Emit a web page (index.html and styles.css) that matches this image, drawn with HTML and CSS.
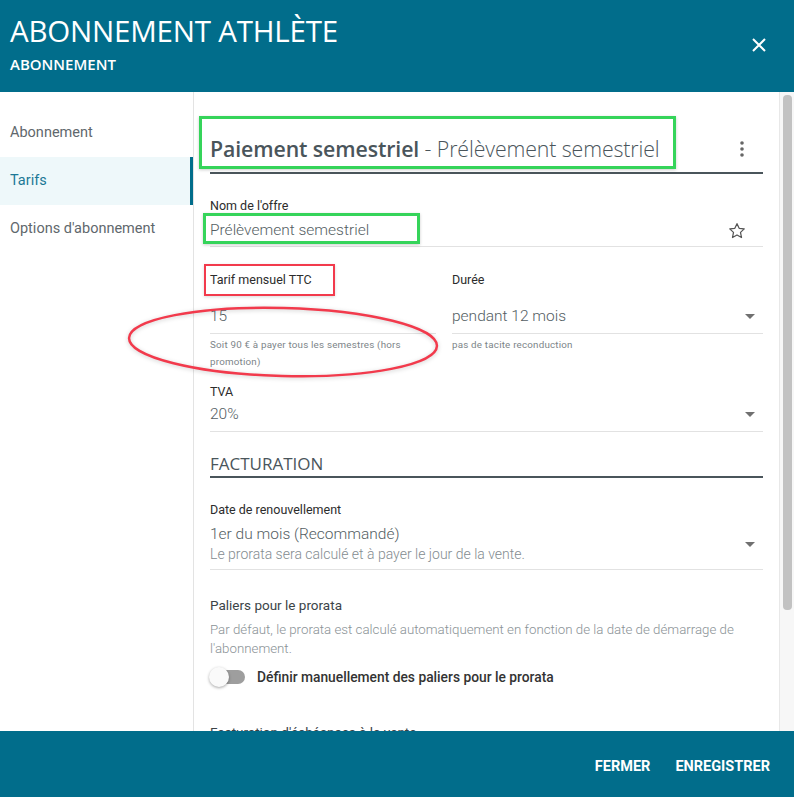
FILE: index.html
```html
<!DOCTYPE html>
<html lang="fr">
<head>
  <meta charset="UTF-8">
  <meta name="viewport" content="width=device-width, initial-scale=1.0">
  <title>Abonnement athlète</title>
  <link rel="stylesheet" href="styles.css">
</head>
<body>
  <div class="dialog">
    <header class="dialog-header">
      <div>
        <h1 class="dialog-title">ABONNEMENT ATHLÈTE</h1>
        <div class="dialog-subtitle">ABONNEMENT</div>
      </div>
      <svg class="close-icon" width="14" height="14" viewBox="0 0 14 14">
        <path d="M1 1L13 13M13 1L1 13" stroke="#fff" stroke-width="2"/>
      </svg>
    </header>

    <div class="dialog-body">
      <nav class="side-menu">
        <a class="menu-item">Abonnement</a>
        <a class="menu-item active">Tarifs</a>
        <a class="menu-item">Options d'abonnement</a>
      </nav>

      <main class="content">
        <div class="section-head">
          <h2 class="section-title mark-green">
            <b>Paiement semestriel</b> - Prélèvement semestriel
          </h2>
          <svg class="kebab" width="4" height="16" viewBox="0 0 4 16">
            <circle cx="2" cy="2" r="1.8" fill="#666"/>
            <circle cx="2" cy="8" r="1.8" fill="#666"/>
            <circle cx="2" cy="14" r="1.8" fill="#666"/>
          </svg>
        </div>

        <div class="field field-name">
          <label class="field-label">Nom de l'offre</label>
          <div class="field-input">
            <span class="field-value mark-green name-box">Prélèvement semestriel</span>
            <svg class="star" width="20" height="20" viewBox="0 0 24 24">
              <path d="M12 3.2l2.6 5.6 6.1.7-4.5 4.2 1.2 6.1L12 16.8l-5.4 3 1.2-6.1-4.5-4.2 6.1-.7z" fill="none" stroke="#555" stroke-width="1.5" stroke-linejoin="round"/>
            </svg>
          </div>
        </div>

        <div class="field-row">
          <div class="field col-left">
            <label class="field-label"><span class="mark-red">Tarif mensuel TTC</span></label>
            <div class="field-input">
              <span class="field-value">15</span>
            </div>
            <p class="field-hint">Soit 90 € à payer tous les semestres (hors promotion)</p>
          </div>
          <div class="field col-right">
            <label class="field-label">Durée</label>
            <div class="field-input">
              <span class="field-value">pendant 12 mois</span>
              <span class="caret"></span>
            </div>
            <p class="field-hint">pas de tacite reconduction</p>
          </div>
        </div>

        <div class="field field-tva">
          <label class="field-label">TVA</label>
          <div class="field-input">
            <span class="field-value">20%</span>
            <span class="caret"></span>
          </div>
        </div>

        <h3 class="subsection">FACTURATION</h3>

        <div class="field field-date">
          <label class="field-label">Date de renouvellement</label>
          <div class="field-input">
            <div>
              <div class="field-value">1er du mois (Recommandé)</div>
              <div class="field-sub">Le prorata sera calculé et à payer le jour de la vente.</div>
            </div>
            <span class="caret"></span>
          </div>
        </div>

        <div class="block">
          <div class="block-title">Paliers pour le prorata</div>
          <p class="block-text">Par défaut, le prorata est calculé automatiquement en fonction de la date de démarrage de l'abonnement.</p>
          <div class="toggle-row">
            <span class="toggle"><span class="toggle-knob"></span></span>
            <span class="toggle-label">Définir manuellement des paliers pour le prorata</span>
          </div>
        </div>

        <div class="block block-next">
          <div class="block-title">Facturation d'échéances à la vente</div>
        </div>
      </main>

      <div class="scrollbar"><div class="scroll-thumb"></div></div>

      <!-- cercle rouge autour du texte d'aide -->
      <svg class="mark-ellipse" width="314" height="74" viewBox="0 0 314 74">
        <ellipse cx="157" cy="37" rx="154" ry="34" fill="none" stroke="#f23a4c" stroke-width="2.5" transform="rotate(1.5 157 37)"/>
      </svg>
    </div>

    <footer class="dialog-footer">
      <button class="footer-btn">FERMER</button>
      <button class="footer-btn">ENREGISTRER</button>
    </footer>
  </div>
</body>
</html>
```

FILE: styles.css
```css
body {
  margin: 0;
  font-family: Roboto, Arial, sans-serif;
  color: #333;
  background: #fff;
}
.dialog {
  width: 794px;
  height: 797px;
  display: flex;
  flex-direction: column;
  overflow: hidden;
}

/* en-tête */
.dialog-header {
  background-color: #016d8b;
  color: white;
  height: 92px;
  box-sizing: border-box;
  padding: 13px 28px 0 10px;
  display: flex;
  justify-content: space-between;
  align-items: flex-start;
}
.dialog-title {
  margin: 0;
  font-family: "Open Sans", sans-serif;
  font-weight: 400;
  font-size: 29.5px;
  line-height: 36px;
  letter-spacing: -0.2px;
}
.dialog-subtitle {
  font-family: "Open Sans", sans-serif;
  font-weight: 600;
  font-size: 15px;
  line-height: 20px;
  margin-top: 5px;
}
.close-icon {
  margin-top: 25px;
}

/* corps */
.dialog-body {
  flex: 1;
  display: flex;
  position: relative;
  min-height: 0;
}
.side-menu {
  width: 193px;
  flex-shrink: 0;
  border-right: 1px solid #e3e3e3;
  padding-top: 17px;
}
.menu-item {
  display: block;
  height: 48px;
  line-height: 48px;
  padding-left: 10px;
  font-size: 14.5px;
  color: #5f686d;
}
.menu-item.active {
  background-color: #eef8fa;
  color: #1b7896;
  border-right: 3px solid #016d8b;
}

.content {
  flex: 1;
  padding: 24px 16px 0 16px;
  overflow: hidden;
  min-width: 0;
}
.scrollbar {
  width: 15px;
  flex-shrink: 0;
  background: #f7f7f7;
  border-left: 1px solid #e8e8e8;
  box-sizing: border-box;
  padding: 3px 2px 0 3px;
}
.scroll-thumb {
  height: 515px;
  background: #c2c2c2;
  border-radius: 4px;
}

/* annotations */
.mark-green {
  border: 3px solid #35d45a;
  box-shadow: 0 1px 3px rgba(0,0,0,0.2);
}
.mark-red {
  display: inline-block;
  border: 2px solid #f23a4c;
  padding: 6px 21px 6px 4px;
  margin-left: -6px;
  box-shadow: 0 1px 3px rgba(0,0,0,0.15);
}
.mark-ellipse {
  position: absolute;
  left: 126px;
  top: 213px;
  filter: drop-shadow(0 1px 2px rgba(0,0,0,0.2));
}

/* titre de section */
.section-head {
  display: flex;
  justify-content: space-between;
  align-items: flex-end;
  border-bottom: 2px solid #4a555b;
  padding-bottom: 3px;
}
.section-title {
  margin: 0 0 0 -11px;
  width: 477px;
  box-sizing: border-box;
  padding: 17px 0 4px 8px;
  font-family: "Open Sans", sans-serif;
  font-weight: 300;
  font-size: 21.3px;
  line-height: 26px;
  color: #4a555b;
  letter-spacing: -0.1px;
}
.section-title b {
  font-weight: 600;
}
.kebab {
  margin: 0 19px 12px 0;
}

/* champs */
.field-label {
  display: block;
  font-size: 12.5px;
  line-height: 16px;
  color: #2c2c2c;
}
.field-input {
  display: flex;
  justify-content: space-between;
  align-items: center;
  border-bottom: 1px solid #e2e2e2;
}
.field-value {
  font-size: 15.5px;
  font-weight: 300;
  color: #545e63;
}
.field-name {
  margin-top: 24px;
}
.field-name .field-input {
  padding-bottom: 2px;
}
.name-box {
  display: block;
  width: 217px;
  box-sizing: border-box;
  margin: -1px 0 0 -7px;
  padding: 3px 4px 0;
  line-height: 22px;
}
.star {
  margin: 3px 16px 0 0;
}
.field-row {
  display: flex;
  gap: 16px;
  margin-top: 16px;
}
.col-left {
  width: 226px;
}
.col-right {
  flex: 1;
}
.field-row .field-label {
  height: 32px;
  line-height: 33px;
}
.field-row .field-label .mark-red {
  line-height: 16px;
}
.field-row .field-input {
  margin-top: 8px;
  height: 26px;
  padding-bottom: 4px;
}
.field-hint {
  margin: 2px 0 0;
  font-size: 9.8px;
  line-height: 17px;
  color: #7d8589;
  letter-spacing: 0.2px;
}
.caret {
  width: 0;
  height: 0;
  border-left: 5px solid transparent;
  border-right: 5px solid transparent;
  border-top: 5px solid #707070;
  margin-right: 8px;
}
.field-tva {
  margin-top: 14px;
}
.field-tva .field-input {
  height: 24px;
  padding-bottom: 5px;
  padding-top: 2px;
}

.subsection {
  margin: 20px 0 0;
  font-family: "Open Sans", sans-serif;
  font-weight: 400;
  font-size: 17px;
  line-height: 24px;
  color: #4a555b;
  border-bottom: 2px solid #4a555b;
  padding-bottom: 0;
}
.field-date {
  margin-top: 24px;
}
.field-date .field-input {
  padding: 6px 0 5px;
}
.field-date .field-value {
  line-height: 20px;
}
.field-sub {
  font-size: 14px;
  font-weight: 300;
  color: #848c90;
  line-height: 20px;
}

.block {
  margin-top: 26px;
}
.block-title {
  font-size: 13.5px;
  color: #3c4448;
  line-height: 18px;
}
.block-text {
  margin: 6px 0 0;
  font-size: 13.3px;
  font-weight: 300;
  line-height: 19px;
  color: #8a9296;
}
.toggle-row {
  display: flex;
  align-items: center;
  margin-top: 11px;
}
.toggle {
  position: relative;
  width: 30px;
  height: 14px;
  border-radius: 7px;
  background: #9e9e9e;
  margin-left: 5px;
}
.toggle-knob {
  position: absolute;
  left: -6px;
  top: -3px;
  width: 20px;
  height: 20px;
  border-radius: 50%;
  background: #fafafa;
  box-shadow: 0 1px 3px rgba(0,0,0,0.35);
}
.toggle-label {
  margin-left: 12px;
  font-size: 13.8px;
  font-weight: 500;
  color: #333;
}
.block-next {
  margin-top: 38px;
}

/* pied */
.dialog-footer {
  background-color: #016d8b;
  height: 66px;
  flex-shrink: 0;
  display: flex;
  justify-content: flex-end;
  align-items: center;
  gap: 25px;
  padding: 4px 24px 0 0;
  box-sizing: border-box;
}
.footer-btn {
  background: none;
  border: none;
  color: white;
  font-family: Roboto, Arial, sans-serif;
  font-weight: 700;
  font-size: 14.5px;
  padding: 0;
  cursor: pointer;
}
```
